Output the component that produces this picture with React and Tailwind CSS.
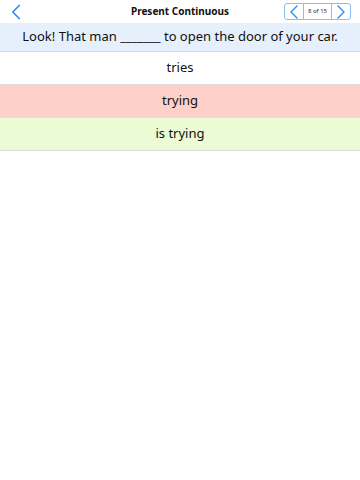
import { ChevronLeft, ChevronRight } from 'lucide-react';

const answers = [
  { text: 'tries', bg: 'bg-white' },
  { text: 'trying', bg: 'bg-[#fdd0ca]' },
  { text: 'is trying', bg: 'bg-[#ebfbd3]' },
];

const App = () => {
  return (
    <div className="w-[360px] h-[480px] bg-white font-['Noto_Sans',sans-serif] text-[#111]">
      <div className="relative flex items-center justify-center h-[23px]">
        <button className="absolute left-[3px] top-[-1px] text-[#2f8cf0]">
          <ChevronLeft size={26} strokeWidth={1.6} />
        </button>
        <h1 className="text-[10px] font-bold">Present Continuous</h1>
        <div className="absolute right-[9px] top-[3px] flex h-[17px] border border-[#8cbdf5] rounded-[3px] overflow-hidden">
          <button className="flex items-center justify-center w-[18px] text-[#2f8cf0]">
            <ChevronLeft size={24} strokeWidth={1.4} className="shrink-0" />
          </button>
          <div className="flex items-center justify-center w-[29px] border-x border-[#8cbdf5] text-[6px] text-[#333]">
            8 of 15
          </div>
          <button className="flex items-center justify-center w-[18px] text-[#2f8cf0]">
            <ChevronRight size={24} strokeWidth={1.4} className="shrink-0" />
          </button>
        </div>
      </div>
      <div className="flex items-center justify-center h-[29px] bg-[#e6f0fc] border-b border-[#d0dcea] text-[13px]">
        Look! That man _______ to open the door of your car.
      </div>
      {answers.map((a) => (
        <div
          key={a.text}
          className={`flex items-center justify-center h-[33px] border-b border-[#dedede] text-[13px] ${a.bg}`}
        >
          {a.text}
        </div>
      ))}
    </div>
  );
};

export default App;
